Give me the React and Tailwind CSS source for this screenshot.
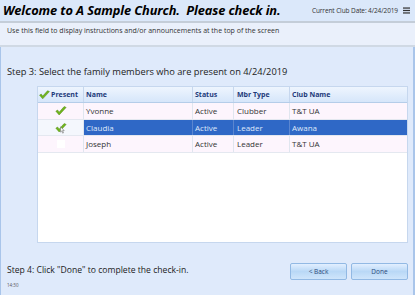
import React from 'react';

const Check = ({ className = '' }) => (
  <svg viewBox="0 0 16 14" className={className}>
    <path d="M0.8 7.2 L5.4 12.6 L15.2 2 L12.4 0.8 L5.4 8.6 L3.2 5.6 Z" fill="#72b51e" stroke="#4e8c10" strokeWidth="0.7" strokeLinejoin="round" />
  </svg>
);

const members = [
  { name: 'Yvonne', status: 'Active', type: 'Clubber', club: 'T&T UA', present: true },
  { name: 'Claudia', status: 'Active', type: 'Leader', club: 'Awana', present: true, selected: true },
  { name: 'Joseph', status: 'Active', type: 'Leader', club: 'T&T UA', present: false },
];

export default function App() {
  return (
    <div className="w-[415px] h-[295px] overflow-hidden bg-[#dfeafb] flex flex-col" style={{ fontFamily: '"Open Sans", "Noto Sans", sans-serif' }}>
      {/* Header */}
      <div className="h-[23px] flex items-center justify-between pl-[3px] pr-[5px] bg-[#dbe8fa] border-b-2 border-[#c4cdd8]">
        <h1 className="text-[12.8px] font-bold italic text-black leading-none tracking-[-0.1px]">Welcome to A Sample Church.&nbsp; Please check in.</h1>
        <div className="flex items-center gap-[5px]">
          <span className="text-[6.5px] text-[#333] tracking-[-0.1px]">Current Club Date: 4/24/2019</span>
          <svg viewBox="0 0 8 7" className="w-[7px] h-[7px]">
            <rect y="0" width="8" height="1.4" fill="#333" />
            <rect y="2.8" width="8" height="1.4" fill="#333" />
            <rect y="5.6" width="8" height="1.4" fill="#333" />
          </svg>
        </div>
      </div>

      {/* Announcement */}
      <div className="h-[24px] bg-[#eaf0fb] border-b-2 border-[#d0d9e4] px-[7px] pt-[4px]">
        <p className="text-[7px] text-[#333] leading-none">Use this field to display instructions and/or announcements at the top of the screen</p>
      </div>

      {/* Main */}
      <div className="flex-1 flex flex-col border-l border-r-2 border-l-[#a9c5ea] border-r-[#a9c5ea] pl-[6px] pr-[5px]">
        <p className="text-[9.3px] text-[#222] mt-[20px] leading-none">Step 3: Select the family members who are present on 4/24/2019</p>

        <div className="mt-[10px] ml-[30px] h-[157px] bg-white border border-[#c6d7ee] flex flex-col">
          <div className="grid grid-cols-[46px_109px_41px_56px_1fr] h-[16px] bg-gradient-to-b from-[#eef5fe] to-[#d6e6fa] border-b border-[#b5cde9] text-[7px] font-bold text-[#1d3a7a]">
            <div className="flex items-center pl-[1px] gap-[1px] border-r border-[#c6d7ee]">
              <Check className="w-[11px] h-[10px]" />
              <span>Present</span>
            </div>
            <div className="flex items-center pl-[2px] border-r border-[#c6d7ee]">Name</div>
            <div className="flex items-center pl-[2px] border-r border-[#c6d7ee]">Status</div>
            <div className="flex items-center pl-[3px] border-r border-[#c6d7ee]">Mbr Type</div>
            <div className="flex items-center pl-[2px]">Club Name</div>
          </div>
          {members.map((m) => (
            <div key={m.name} className="grid grid-cols-[46px_109px_41px_56px_1fr] h-[16.5px] border-b border-[#e4e8f0] text-[8px] bg-[#fdf5fd]">
              <div className={`flex items-center justify-center border-r border-[#e0e6ef] ${m.selected ? 'bg-[#f4f7fd]' : ''}`}>
                {m.present ? (
                  <div className="relative">
                    <Check className="w-[12px] h-[10px]" />
                    {m.selected && (
                      <svg viewBox="0 0 6 9" className="absolute left-[5px] top-[3px] w-[5px] h-[8px]">
                        <path d="M0.5 0.5 L0.5 7 L2 5.6 L3.2 8.3 L4.2 7.8 L3 5.2 L5 5.2 Z" fill="#fff" stroke="#555" strokeWidth="0.6" />
                      </svg>
                    )}
                  </div>
                ) : (
                  <div className="w-[8px] h-[8px] bg-white" />
                )}
              </div>
              <div className={`flex items-center pl-[2px] border-r ${m.selected ? 'bg-[#2f68c6] text-[#dfe9fa] border-[#5b86d0]' : 'text-[#333] border-[#e0e6ef]'}`}>{m.name}</div>
              <div className={`flex items-center pl-[2px] border-r ${m.selected ? 'bg-[#2f68c6] text-[#dfe9fa] border-[#5b86d0]' : 'text-[#333] border-[#e0e6ef]'}`}>{m.status}</div>
              <div className={`flex items-center pl-[3px] border-r ${m.selected ? 'bg-[#2f68c6] text-[#dfe9fa] border-[#5b86d0]' : 'text-[#333] border-[#e0e6ef]'}`}>{m.type}</div>
              <div className={`flex items-center pl-[2px] ${m.selected ? 'bg-[#2f68c6] text-[#dfe9fa]' : 'text-[#333]'}`}>{m.club}</div>
            </div>
          ))}
        </div>

        <div className="flex items-start justify-between mt-[20px]">
          <div className="pt-[3px]">
            <p className="text-[8.6px] text-[#222] leading-none">Step 4: Click "Done" to complete the check-in.</p>
            <p className="text-[4.5px] text-[#555] mt-[8px] leading-none">14:30</p>
          </div>
          <div className="flex gap-[4px]">
            <button className="w-[57px] h-[17px] rounded-[2px] border border-[#92b9e4] bg-gradient-to-b from-[#e2efff] via-[#b9d8f6] to-[#cfe5fb] text-[6.5px] text-[#2a4a7a]">&lt; Back</button>
            <button className="w-[57px] h-[17px] rounded-[2px] border border-[#92b9e4] bg-gradient-to-b from-[#e2efff] via-[#b9d8f6] to-[#cfe5fb] text-[6.5px] text-[#2a4a7a]">Done</button>
          </div>
        </div>
      </div>
    </div>
  );
}
